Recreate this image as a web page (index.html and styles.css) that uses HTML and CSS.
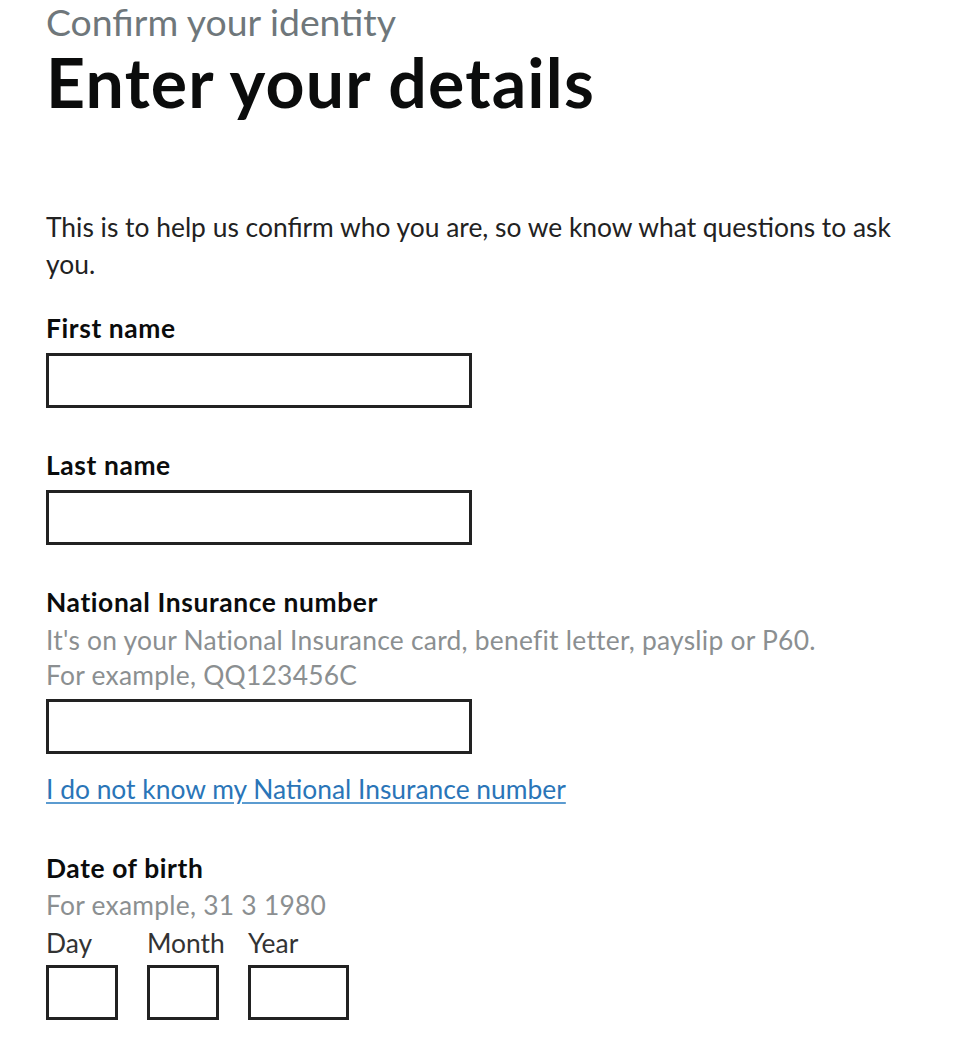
FILE: index.html
```html
<!DOCTYPE html>
<html lang="en">
<head>
<meta charset="utf-8">
<title>Enter your details</title>
<link rel="stylesheet" href="styles.css">
</head>
<body>
<main class="page">
  <span class="caption">Confirm your identity</span>
  <h1 class="heading">Enter your details</h1>
  <p class="body">This is to help us confirm who you are, so we know what questions to ask you.</p>

  <div class="group group-first">
    <label class="label" for="first">First name</label>
    <input class="input" id="first" type="text">
  </div>

  <div class="group">
    <label class="label" for="last">Last name</label>
    <input class="input" id="last" type="text">
  </div>

  <div class="group">
    <label class="label label-hinted" for="nino">National Insurance number</label>
    <div class="hint">It's on your National Insurance card, benefit letter, payslip or P60.<br>For example, QQ123456C</div>
    <input class="input" id="nino" type="text">
  </div>

  <p class="link-row"><a class="link" href="#">I do not know my National Insurance number</a></p>

  <div class="group group-dob">
    <div class="label label-hinted">Date of birth</div>
    <div class="hint hint-dob">For example, 31 3 1980</div>
    <div class="date">
      <div class="date-item">
        <label class="date-label" for="d">Day</label>
        <input class="input input-2" id="d" type="text">
      </div>
      <div class="date-item">
        <label class="date-label" for="m">Month</label>
        <input class="input input-2" id="m" type="text">
      </div>
      <div class="date-item">
        <label class="date-label" for="y">Year</label>
        <input class="input input-4" id="y" type="text">
      </div>
    </div>
  </div>
</main>
</body>
</html>
```

FILE: styles.css
```css
html, body {
  margin: 0;
  padding: 0;
  background: #ffffff;
}
body {
  font-family: Lato, "Liberation Sans", sans-serif;
  color: #0b0c0c;
}
.page {
  padding: 0 46px;
}
.caption {
  display: block;
  font-size: 37.4px;
  line-height: 40px;
  padding-top: 2px;
  color: #6f777b;
}
.heading {
  margin: 0;
  font-size: 68px;
  line-height: 80px;
  letter-spacing: 1.2px;
  font-weight: 700;
}
.body {
  margin: 87px 0 0;
  font-size: 26.4px;
  line-height: 37px;
  color: #222;
  max-width: 860px;
}
.group {
  margin-top: 39px;
}
.group-first {
  margin-top: 27px;
}
.label {
  display: block;
  font-size: 26.4px;
  line-height: 36px;
  letter-spacing: 0.6px;
  font-weight: 700;
  margin-bottom: 7px;
}
.label-hinted {
  margin-bottom: 0;
}
.hint {
  font-size: 26.4px;
  line-height: 35px;
  letter-spacing: 0.25px;
  color: #8b8f91;
  margin-top: 3px;
  margin-bottom: 6px;
}
.hint-dob {
  margin-top: 2px;
  margin-bottom: 2px;
}
.input {
  display: block;
  box-sizing: border-box;
  width: 426px;
  height: 55px;
  border: 3px solid #222;
  margin: 0;
  padding: 4px;
  font: inherit;
  background: #fff;
}
.link-row {
  margin: 17px 0 0;
  font-size: 26.4px;
  line-height: 36px;
}
.link {
  color: #2a75b8;
  text-decoration: underline;
  text-decoration-color: #5b9bd0;
  text-underline-offset: 3px;
}
.group-dob {
  margin-top: 43px;
}
.date {
  display: flex;
  gap: 29px;
}
.date-item {
  display: flex;
  flex-direction: column;
}
.date-label {
  width: 0;
  white-space: nowrap;
  font-size: 26.4px;
  line-height: 36px;
  color: #333;
  margin-bottom: 4px;
}
.input-2 {
  width: 72px;
}
.input-4 {
  width: 101px;
}
```
